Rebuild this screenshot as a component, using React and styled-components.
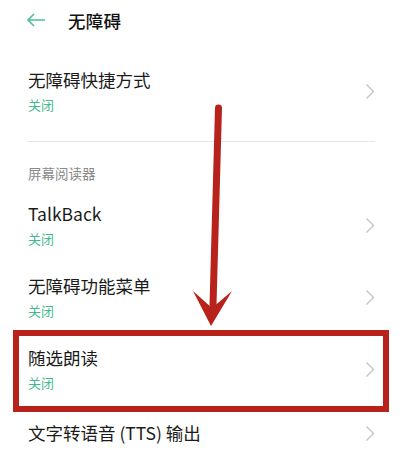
import React from 'react';
import styled, { createGlobalStyle } from 'styled-components';

const items = [
  { id: 'talkback', title: 'TalkBack', sub: '关闭' },
  { id: 'menu', title: '无障碍功能菜单', sub: '关闭' },
  { id: 'select', title: '随选朗读', sub: '关闭', marked: true },
];

const Chevron = () => (
  <svg width="10" height="17" viewBox="0 0 10 17">
    <polyline points="1.5,1.5 8.5,8.5 1.5,15.5" fill="none" stroke="#c4c4c4" strokeWidth="1.4" />
  </svg>
);

const SettingRow = ({ title, sub, marked, single }) => (
  <Row $marked={marked} $single={single}>
    <TextCol>
      <Title>{title}</Title>
      {sub && <Sub>{sub}</Sub>}
    </TextCol>
    <Chevron />
  </Row>
);

const App = () => {
  return (
    <Page>
      <GlobalStyle />
      <Header>
        <svg width="20" height="14" viewBox="0 0 20 14">
          <path d="M19 7H2M8 1L2 7l6 6" fill="none" stroke="#4cbf98" strokeWidth="1.6" />
        </svg>
        <HeaderTitle>无障碍</HeaderTitle>
      </Header>

      <SettingRow title="无障碍快捷方式" sub="关闭" />
      <Divider />

      <SectionLabel>屏幕阅读器</SectionLabel>
      {items.map((it) => (
        <SettingRow key={it.id} title={it.title} sub={it.sub} marked={it.marked} />
      ))}
      <SettingRow title="文字转语音 (TTS) 输出" single />

      {/* red annotation arrow */}
      <ArrowLayer width="413" height="470" viewBox="0 0 413 470">
        <line x1="218.5" y1="108" x2="213" y2="305" stroke="#b7221b" strokeWidth="7" strokeLinecap="round" />
        <polygon points="193,291 212,308 232,291 211,326" fill="#b7221b" />
      </ArrowLayer>
    </Page>
  );
};

export default App;

const GlobalStyle = createGlobalStyle`
  html, body {
    margin: 0;
    padding: 0;
    background: #ffffff;
  }
  body {
    font-family: 'Noto Sans CJK SC', 'Noto Sans', sans-serif;
    color: #1b1b1b;
  }
`;

const Page = styled.div`
  position: relative;
  width: 413px;
  height: 470px;
  overflow: hidden;
  background: #fff;
`;

const Header = styled.div`
  height: 40px;
  display: flex;
  align-items: center;
  padding-left: 26px;
  gap: 22px;
  margin-bottom: 15px;
`;

const HeaderTitle = styled.div`
  font-size: 17.5px;
  font-weight: 500;
  color: #111;
  letter-spacing: 0.3px;
`;

const Row = styled.div`
  position: relative;
  height: ${(p) => (p.$single ? '56px' : '72px')};
  display: flex;
  align-items: center;
  justify-content: space-between;
  padding: 0 38px 0 28px;

  ${(p) =>
    p.$marked &&
    `
    &::after {
      content: '';
      position: absolute;
      left: 13px;
      right: 24px;
      top: -3px;
      bottom: -7px;
      border: 6.5px solid #b7221b;
      pointer-events: none;
    }
  `}
`;

const TextCol = styled.div`
  display: flex;
  flex-direction: column;
  gap: 4px;
`;

const Title = styled.div`
  font-size: 17.5px;
  line-height: 24px;
  color: #1b1b1b;
`;

const Sub = styled.div`
  font-size: 13px;
  line-height: 18px;
  color: #45b98e;
`;

const Divider = styled.div`
  height: 1px;
  background: #e6e6e6;
  margin: 14px 38px 0 28px;
`;

const SectionLabel = styled.div`
  padding: 22px 0 0 28px;
  height: 25px;
  font-size: 13.5px;
  line-height: 18px;
  color: #8a8a8a;
`;

const ArrowLayer = styled.svg`
  position: absolute;
  top: 0;
  left: 0;
  pointer-events: none;
`;
